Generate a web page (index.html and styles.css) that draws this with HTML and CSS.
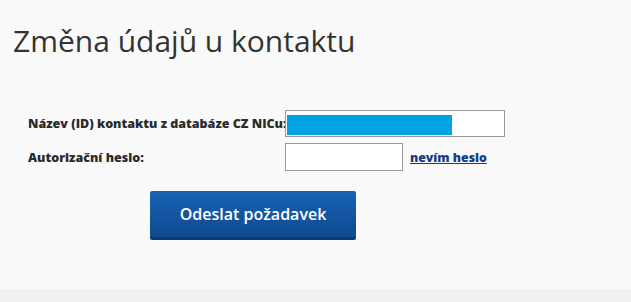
FILE: index.html
```html
<!DOCTYPE html>
<html lang="cs">
<head>
    <meta charset="UTF-8">
    <meta name="viewport" content="width=device-width, initial-scale=1.0">
    <title>Změna údajů u kontaktu</title>
    <link rel="stylesheet" href="styles.css">
</head>
<body>
    <div class="content">
        <h1>Změna údajů u kontaktu</h1>
        <form class="contact-form">
            <div class="form-row">
                <label for="contact-id">Název (ID) kontaktu z databáze CZ NICu:</label>
                <div class="field field-wide">
                    <input type="text" id="contact-id">
                    <span class="masked"></span>
                </div>
            </div>
            <div class="form-row">
                <label for="auth-pw">Autorizační heslo:</label>
                <div class="field">
                    <input type="password" id="auth-pw">
                </div>
                <a href="#" class="forgot-link">nevím heslo</a>
            </div>
            <button type="button" class="submit-btn">Odeslat požadavek</button>
        </form>
    </div>
    <div class="footer"></div>
</body>
</html>
```

FILE: styles.css
```css
body {
    margin: 0;
    background-color: #f1f1f1;
    font-family: "Open Sans", Arial, sans-serif;
    color: #333;
}
.content {
    background-color: #f9f9f9;
    height: 289px;
    padding: 0 13px;
    box-sizing: border-box;
    overflow: hidden;
}
h1 {
    margin: 0;
    padding-top: 21px;
    font-size: 30px;
    font-weight: 400;
    line-height: 40px;
    color: #333;
}
.contact-form {
    margin-top: 49px;
    padding-left: 15px;
}
.form-row {
    display: flex;
    align-items: center;
    margin-bottom: 6px;
}
.form-row label {
    width: 257px;
    white-space: nowrap;
    font-size: 12.5px;
    font-weight: 800;
    color: #2b2b2b;
}
.field {
    position: relative;
    width: 118px;
    height: 28px;
}
.field-wide {
    width: 220px;
    height: 27px;
}
.field input {
    width: 100%;
    height: 100%;
    box-sizing: border-box;
    border: 1px solid #999;
    background-color: #fff;
    margin: 0;
    padding: 0 4px;
}
/* hidden value of the contact id */
.masked {
    position: absolute;
    left: 2px;
    top: 5px;
    width: 165px;
    height: 20px;
    background-color: #00a2e3;
}
.forgot-link {
    margin-left: 7px;
    font-size: 12.3px;
    font-weight: 800;
    color: #133d87;
}
.submit-btn {
    display: block;
    margin-top: 20px;
    margin-left: 122px;
    width: 206px;
    height: 49px;
    border: none;
    border-bottom: 3px solid #0a3a72;
    border-radius: 2px;
    background: linear-gradient(#1862b4, #0f4a8e);
    color: #fff;
    font-family: "Open Sans", Arial, sans-serif;
    font-size: 16px;
    font-weight: 600;
    cursor: pointer;
}
```
